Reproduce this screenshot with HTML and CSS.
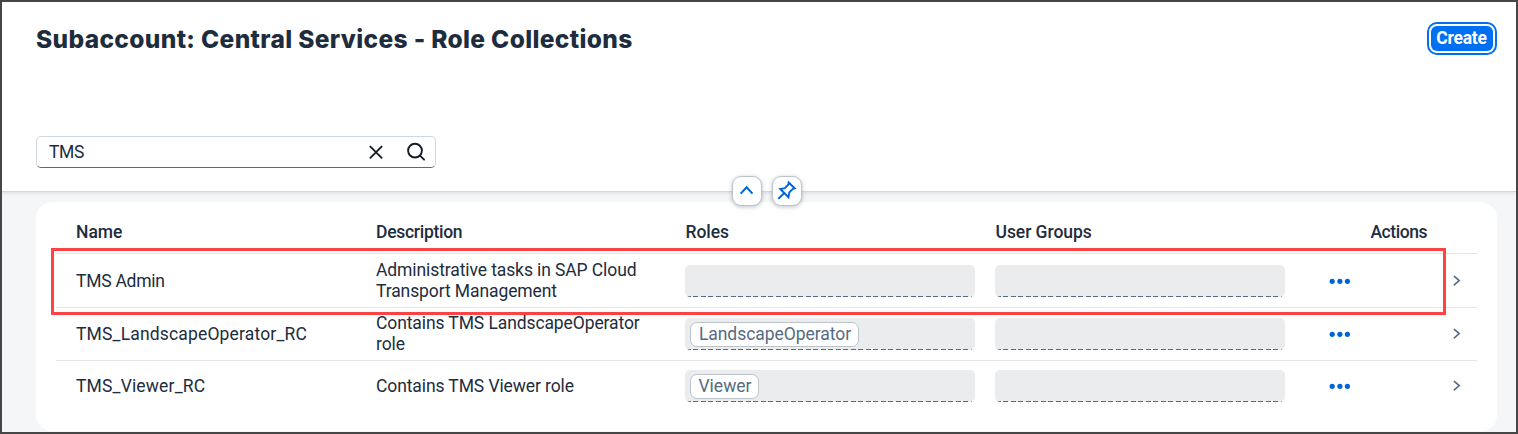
FILE: index.html
```html
<!DOCTYPE html>
<html lang="en">
<head>
<meta charset="utf-8">
<title>Role Collections</title>
<link rel="stylesheet" href="styles.css">
</head>
<body>
<div class="page">
  <header class="page-header">
    <div class="title-bar">
      <h1 class="title">Subaccount: Central Services - Role Collections</h1>
      <button class="create" type="button"><span class="create-label">Create</span></button>
    </div>
    <div class="search">
      <span class="search-value">TMS</span>
      <svg class="clear-icon" width="14" height="14" viewBox="0 0 14 14"><path d="M1.4 1.6 12.6 12.8M12.6 1.6 1.4 12.8"/></svg>
      <svg class="search-icon" width="20" height="20" viewBox="0 0 20 20"><circle cx="9" cy="8.6" r="6.9"/><path d="M14 13.6 18.1 17.7"/></svg>
    </div>
    <div class="header-toggles">
      <span class="toggle"><svg width="28" height="28" viewBox="0 0 28 28"><path d="M7.7 16.6 13.6 10.2 19.5 16.6"/></svg></span>
      <span class="toggle"><svg class="pin" width="28" height="28" viewBox="0 0 28 28"><path d="M15.7 5.5 21.7 11.3 19.9 11.8 16.3 15.4 15.5 20.2 7.3 12 11.9 11.2 15.4 7.5ZM11.1 16.2 5.3 21.8"/></svg></span>
    </div>
  </header>
  <main class="content">
    <section class="card">
      <div class="row head">
        <span>Name</span><span class="head-desc">Description</span><span class="head-field">Roles</span><span class="head-field">User Groups</span><span class="head-actions">Actions</span>
      </div>
      <div class="row first">
        <span class="name-plain">TMS Admin</span><span class="desc">Administrative tasks in SAP Cloud Transport Management</span>
        <span class="field"></span><span class="field"></span>
        <svg class="dots" width="22" height="6" viewBox="0 0 22 6"><circle cx="3.2" cy="3.3" r="2.6"/><circle cx="10.9" cy="3.3" r="2.6"/><circle cx="18.4" cy="3.3" r="2.6"/></svg>
        <svg class="chevron" width="8" height="12" viewBox="0 0 8 12"><path d="M1.3 1.4 6.2 5.6 1.3 9.8"/></svg>
      </div>
      <div class="row second">
        <span class="name-code">TMS_LandscapeOperator_RC</span><span class="desc">Contains TMS LandscapeOperator role</span>
        <span class="field"><span class="token token-wide">LandscapeOperator</span></span><span class="field"></span>
        <svg class="dots" width="22" height="6" viewBox="0 0 22 6"><circle cx="3.2" cy="3.3" r="2.6"/><circle cx="10.9" cy="3.3" r="2.6"/><circle cx="18.4" cy="3.3" r="2.6"/></svg>
        <svg class="chevron" width="8" height="12" viewBox="0 0 8 12"><path d="M1.3 1.4 6.2 5.6 1.3 9.8"/></svg>
      </div>
      <div class="row third">
        <span class="name-code">TMS_Viewer_RC</span><span class="desc">Contains TMS Viewer role</span>
        <span class="field"><span class="token token-narrow">Viewer</span></span><span class="field"></span>
        <svg class="dots" width="22" height="6" viewBox="0 0 22 6"><circle cx="3.2" cy="3.3" r="2.6"/><circle cx="10.9" cy="3.3" r="2.6"/><circle cx="18.4" cy="3.3" r="2.6"/></svg>
        <svg class="chevron" width="8" height="12" viewBox="0 0 8 12"><path d="M1.3 1.4 6.2 5.6 1.3 9.8"/></svg>
      </div>
    </section>
  </main>
  <div class="highlight"></div>
</div>
</body>
</html>
```
FILE: styles.css
```css
* { box-sizing: border-box; }
body { margin: 0; font-family: Roboto, "Liberation Sans", sans-serif; font-size: 17.5px; color: #1d2d3e; }
svg { display: block; fill: none; stroke-linecap: round; stroke-linejoin: miter; }
.page { position: relative; width: 1518px; height: 434px; border: 2px solid #464646; background: #f5f6f7; overflow: hidden; display: flex; flex-direction: column; }
.page-header { position: relative; height: 190px; flex: none; background: #fff; border-bottom: 1px solid #d5d7d9; box-shadow: 0 1px 4px rgba(34,53,72,.12); padding: 20px 19px 0 34px; z-index: 1; }
.title-bar { display: flex; justify-content: space-between; align-items: flex-start; height: 114px; }
.title { margin: 3px 0 0; font-family: Inter, "Noto Sans", sans-serif; font-weight: 850; font-size: 24.5px; line-height: 29px; letter-spacing: .35px; white-space: nowrap; }
.create { width: 70px; height: 33px; padding: 2px; border: 2px solid #0070f2; border-radius: 10px; background: #fff; }
.create-label { display: flex; align-items: center; justify-content: center; height: 25px; padding: 0 1px 2px 0; border-radius: 6px; background: #0070f2; color: #fff; font-family: Roboto, sans-serif; font-weight: 700; font-size: 17.5px; letter-spacing: -.2px; }
.search { display: flex; align-items: center; width: 400px; height: 32px; padding: 0 9px 0 12px; border: 1px solid #d0d7e2; border-bottom-color: #556b82; border-radius: 5px; }
.search-value { flex: 1; line-height: 30px; letter-spacing: -.35px; }
.clear-icon, .search-icon { stroke: #131e29; stroke-width: 1.9; }
.search-icon { margin-left: 23px; }
.header-toggles { position: absolute; left: 730px; bottom: -15px; display: flex; gap: 10px; }
.toggle { width: 30px; height: 30px; border: 1px solid #bcc3ca; border-radius: 9px; background: #fff; box-shadow: 0 1px 4px rgba(34,53,72,.3); }
.toggle svg { stroke: #0064d9; stroke-width: 2; stroke-linecap: butt; }
.toggle .pin { stroke-width: 1.9; }
.content { padding: 10px 19px 0 34px; }
.card { height: 229px; padding: 8px 20px; border-radius: 16px; background: #fff; }
.row { display: grid; grid-template-columns: 300px 309px 310px 310px 122px 50px; align-items: center; padding-left: 20px; border-bottom: 1px solid #e5e5e5; white-space: nowrap; }
.head { height: 44px; font-weight: 500; }
.head-desc { letter-spacing: -.28px; }
.head-field { padding-left: .5px; letter-spacing: -.05px; }
.head-actions { text-align: right; letter-spacing: -.45px; }
.first { height: 54px; }
.second { height: 53px; }
.third { height: 50px; border-bottom: 0; }
.name-plain { letter-spacing: -.25px; }
.name-code { letter-spacing: .16px; }
.desc { width: 280px; line-height: 21px; letter-spacing: -.1px; white-space: normal; }
.field { display: flex; align-items: flex-start; width: 290px; height: 32px; padding: 4px 0 0 5px; border-radius: 5px; background: repeating-linear-gradient(90deg, #556b82 0 5px, #eaecee 5px 7.5px) 1px 100% / 286px 1px no-repeat #eaecee; }
.token { height: 25px; padding-left: 1px; border: 1px solid #bcc3ca; border-radius: 7px; background: #fff; color: #556b82; line-height: 23px; text-align: center; }
.token-wide { width: 169px; letter-spacing: -.05px; }
.token-narrow { width: 69px; }
.dots { fill: #0064d9; margin-left: 24px; }
.chevron { stroke: #556b82; stroke-width: 1.6; margin-left: 26px; }
.highlight { position: absolute; left: 49px; top: 246px; width: 1395px; height: 67px; border: 3px solid #ff4343; z-index: 2; }
```
